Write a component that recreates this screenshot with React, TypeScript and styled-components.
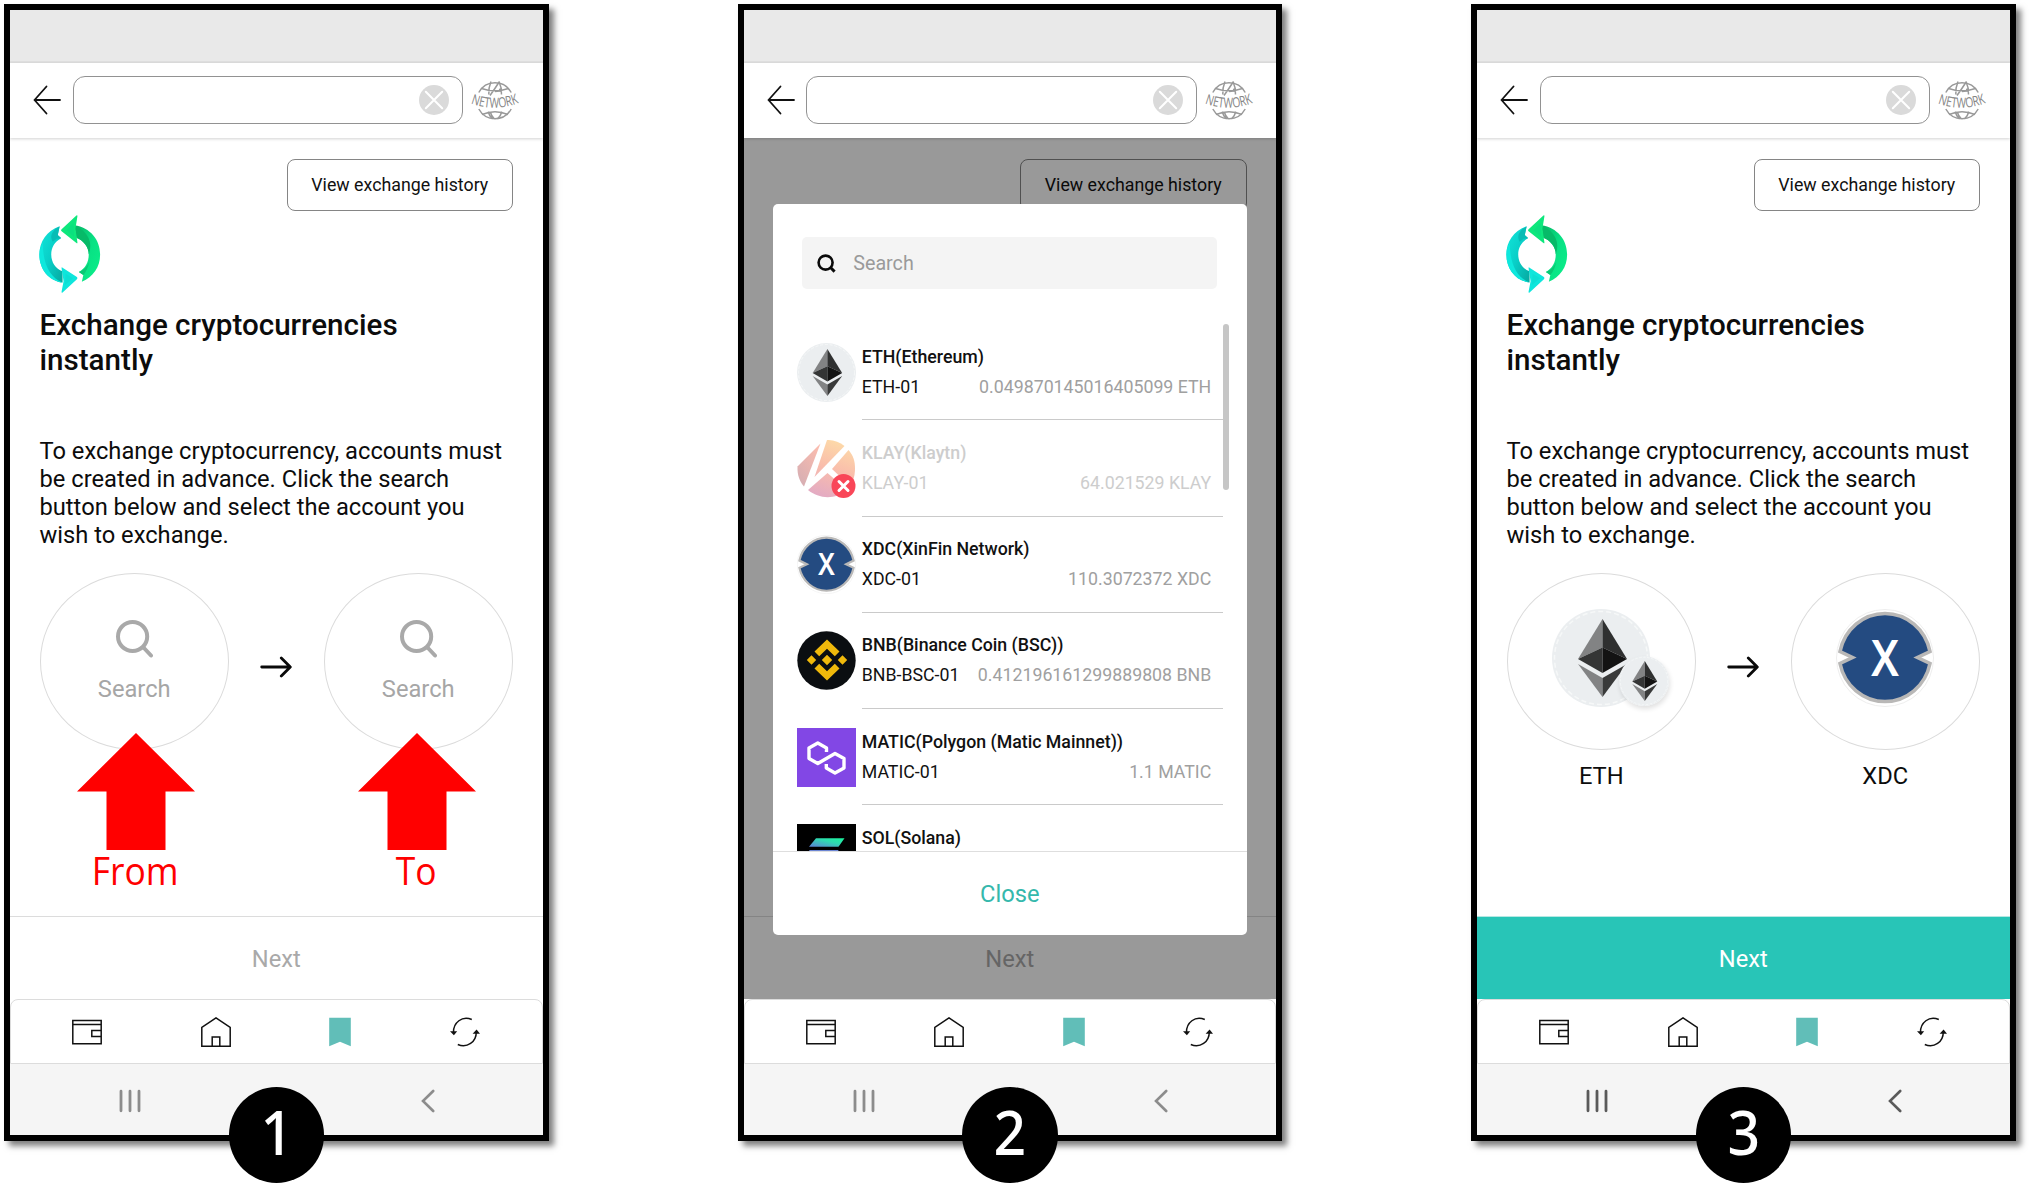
import React from "react";
import styled, { createGlobalStyle } from "styled-components";

const Global = createGlobalStyle`
  * { box-sizing: border-box; }
  body { margin: 0; background: #fff; font-family: Roboto, "Noto Sans", sans-serif; color: #0c0c0c; }
`;

const Board = styled.main`
  width: 2029px;
  height: 1195px;
  padding: 4px 0 0 4px;
  display: flex;
  align-items: flex-start;
  gap: 189px;
  overflow: hidden;
`;

const Phone = styled.section`
  position: relative;
  flex: none;
  width: 544.5px;
  height: 1137px;
  border: 6px solid #000;
  background: #fff;
  display: flex;
  flex-direction: column;
  box-shadow: 5px 5px 6px rgba(0, 0, 0, 0.5);
`;

const StatusBar = styled.div`
  flex: none;
  height: 53px;
  background: #e9e9e9;
  border-bottom: 2px solid #e0e0e0;
`;

const Header = styled.header`
  flex: none;
  height: 75px;
  padding: 0 20px 2px 23px;
  display: flex;
  align-items: center;
  box-shadow: 0 1px 3px rgba(0, 0, 0, 0.18);
`;

const AddressField = styled.div`
  flex: none;
  width: 390.5px;
  height: 48px;
  margin: 0 5px 0 11.5px;
  padding-right: 13px;
  border: 1.5px solid #929292;
  border-radius: 12px;
  display: flex;
  align-items: center;
  justify-content: flex-end;
`;

const Content = styled.div`
  flex: 1;
  min-height: 0;
  padding: 21px 29.5px 0 29.5px;
  display: flex;
  flex-direction: column;
  align-items: stretch;
`;

const HistoryButton = styled.button`
  align-self: flex-end;
  width: 226.5px;
  height: 52px;
  padding: 0;
  border: 1.5px solid #858585;
  border-radius: 8px;
  background: transparent;
  font: 400 17.8px/50px Roboto, sans-serif;
  color: #111;
`;

const Logo = styled.svg`
  flex: none;
  width: 79px;
  height: 94px;
  margin: -6px 0 3px -9.5px;
`;

const Title = styled.h1`
  margin: 6px 0 59px;
  font-size: 29.6px;
  font-weight: 500;
  line-height: 35px;
`;

const Intro = styled.p`
  margin: 0 -12px 24px 0;
  font-size: 23.7px;
  line-height: 28.1px;
`;

const Pair = styled.div`
  display: flex;
  justify-content: space-between;
  align-items: flex-start;
`;

const Slot = styled.div`
  width: 189.5px;
  display: flex;
  flex-direction: column;
  align-items: center;
`;

const Oval = styled.div<{ $filled?: boolean }>`
  width: 189.5px;
  height: 177px;
  padding-top: ${(p) => (p.$filled ? "35px" : "46px")};
  border: 1.5px solid #dbdbdb;
  border-radius: 50%;
  display: flex;
  flex-direction: column;
  align-items: center;
  gap: 16.5px;
`;

const OvalLabel = styled.span`
  font-size: 23.7px;
  line-height: 28px;
  color: #a6a6a6;
`;

const CoinLabel = styled.span`
  margin-top: 12px;
  font-size: 23.7px;
  line-height: 28px;
`;

const ArrowBox = styled.div`
  height: 187px;
  display: flex;
  align-items: center;
`;

const CoinStack = styled.div`
  position: relative;
  width: 98px;
  height: 98px;
`;

const SmallCoin = styled.div`
  position: absolute;
  left: 67px;
  top: 47px;
  width: 50px;
  height: 50px;
  border-radius: 50%;
  box-shadow: 1px 3px 5px rgba(0, 0, 0, 0.12);
`;

const NextBar = styled.div<{ $active?: boolean }>`
  flex: none;
  height: 82.5px;
  border-top: 1.5px solid ${(p) => (p.$active ? "#b5e8e3" : "#dcdcdc")};
  background: ${(p) => (p.$active ? "#28c5b7" : "transparent")};
  color: ${(p) => (p.$active ? "#fff" : "#a9a9a9")};
  font-size: 23.7px;
  line-height: 84px;
  text-align: center;
`;

const TabBar = styled.nav`
  flex: none;
  height: 65.5px;
  padding: 1px 61.5px 0 61px;
  border: 1px solid #dcdcdc;
  border-radius: 8px 8px 0 0;
  display: flex;
  align-items: center;
  justify-content: space-between;
  background: #fff;
`;

const SystemBar = styled.div`
  flex: none;
  height: 71px;
  padding: 3px 108px 0 109px;
  display: flex;
  align-items: center;
  justify-content: space-between;
  background: #f5f5f5;
`;

const Badge = styled.div`
  position: absolute;
  left: 218.5px;
  bottom: -48px;
  width: 95.5px;
  height: 96px;
  border-radius: 50%;
  background: #000;
  color: #fff;
  font: 500 62px/89px "Noto Sans", sans-serif;
  text-align: center;
`;

const Digit = styled.span`
  display: inline-block;
  transform: scaleX(0.92);
`;

const Pointer = styled.div<{ $x: number }>`
  position: absolute;
  left: ${(p) => p.$x}px;
  top: 723px;
  width: 118px;
  display: flex;
  flex-direction: column;
  align-items: center;
`;

const PointerLabel = styled.span`
  color: #f00;
  font: 400 38.5px/40px "Open Sans", sans-serif;
  transform: scaleX(0.92);
`;

const Dim = styled.div`
  position: absolute;
  left: 0;
  right: 0;
  top: 128px;
  height: 861px;
  padding-top: 65.5px;
  background: rgba(0, 0, 0, 0.4);
  display: flex;
  justify-content: center;
  align-items: flex-start;
`;

const Modal = styled.div`
  width: 474px;
  height: 731px;
  border-radius: 5px;
  background: #fff;
  display: flex;
  flex-direction: column;
`;

const SearchField = styled.div`
  flex: none;
  height: 52px;
  margin: 33.5px 29.5px 35px 29px;
  padding-left: 15px;
  border-radius: 5px;
  background: #f4f4f4;
  display: flex;
  align-items: center;
  gap: 17.5px;
  font-size: 19.7px;
  line-height: 53px;
  color: #9a9a9a;
`;

const List = styled.div`
  flex: 1;
  min-height: 0;
  padding: 0 18px 0 24px;
  display: flex;
  overflow: hidden;
`;

const Rows = styled.div`
  width: 426px;
`;

const Thumb = styled.div`
  width: 6px;
  height: 166px;
  border-radius: 3px;
  background: #c6c6c6;
`;

const Row = styled.div`
  height: 96.3px;
  display: flex;
  align-items: flex-start;
`;

const CoinIcon = styled.div`
  flex: none;
  width: 59px;
  height: 59px;
  margin-top: 18.5px;
`;

const RowBody = styled.div<{ $off?: boolean }>`
  flex: 1;
  height: 96.3px;
  margin-left: 6px;
  padding: 17.5px 11.5px 0 0;
  border-bottom: 1.5px solid #cacaca;
  color: ${(p) => (p.$off ? "#cdcdcd" : "#111")};
  font-size: 17.75px;
  line-height: 30px;
  white-space: nowrap;
`;

const RowName = styled.div`
  font-weight: 500;
`;

const RowMeta = styled.div`
  display: flex;
  justify-content: space-between;
`;

const Amount = styled.span<{ $off?: boolean }>`
  color: ${(p) => (p.$off ? "#cdcdcd" : "#a0a0a0")};
`;

const CloseBar = styled.div`
  flex: none;
  height: 84px;
  border-top: 1.5px solid #dedede;
  color: #35b8ac;
  font-size: 23.7px;
  line-height: 84px;
  text-align: center;
`;

const BackIcon = () => (
  <svg width="28" height="30" viewBox="0 0 28 30" fill="none" stroke="#111" strokeWidth="1.8" strokeLinecap="round" strokeLinejoin="round">
    <path d="M27 15H1.5M13.5 1.5L1.5 15l12 13.5" />
  </svg>
);

const ClearIcon = () => (
  <svg width="30" height="30" viewBox="0 0 30 30">
    <circle cx="15" cy="15" r="15" fill="#dadada" />
    <path d="M6.8 6.8l16.4 16.4M23.2 6.8L6.8 23.2" stroke="#fff" strokeWidth="2" strokeLinecap="round" />
  </svg>
);

const NetworkIcon = () => (
  <svg width="54" height="50" viewBox="-3 -4 54 50" fill="none" stroke="#999" strokeWidth="1.5">
    <path d="M7.800 13.500a18.500 18.800 0 0 1 32.400 0M7.800 30a18.500 18.800 0 0 0 32.400 0" />
    <path d="M10.500 9.500Q24 14 37.500 9.500M20 2.500Q17.500 8.500 17.800 15.500M28 2.500Q30.800 8.500 30.500 15.500M28.500 2.500Q24 9.500 19 16.500M24 12.500l7-.8" />
    <path d="M11 35.500Q24 30 37 35.500M17.500 32.500Q18 37 21.500 40M30.500 32.500Q30 37 26.500 40M23 39.500Q20 36 19.500 33.500" />
    <circle cx="29.500" cy="11" r="1.700" fill="#999" stroke="none" />
    <path id="networkArc" d="M-.3 24.300Q24 33.500 48.300 23.800" stroke="none" />
    <text fontFamily="Open Sans, sans-serif" fontSize="14" fill="#858585" stroke="none">
      <textPath href="#networkArc" textLength="49.500" lengthAdjust="spacingAndGlyphs">NETWORK</textPath>
    </text>
  </svg>
);

const ExchangeLogo = () => (
  <Logo viewBox="0 0 80 95">
    <defs>
      <linearGradient id="cyanRing" x1="0" y1="0" x2="1" y2="1">
        <stop offset="0" stopColor="#12e6da" />
        <stop offset="0.5" stopColor="#09cfc8" />
        <stop offset="1" stopColor="#06a89f" />
      </linearGradient>
      <linearGradient id="greenRing" x1="0" y1="0" x2="1" y2="1">
        <stop offset="0" stopColor="#08b565" />
        <stop offset="0.5" stopColor="#08e184" />
        <stop offset="1" stopColor="#0bf08a" />
      </linearGradient>
    </defs>
    <path d="M30 21.5C17 26 9.5 37 9.5 50c0 15 9.500 26.500 23.500 28.500V67C26 64.500 21.500 58 21.500 50c0-7 3.500-13 10-16.500L28 30.500z" fill="url(#cyanRing)" />
    <path d="M26 24C22 28 20 32 23 37l4-3 4.500-.8-3.300-2.900 1.800-8.500z" fill="#08bcb5" />
    <path d="M9.500 50c0 15 9.500 26.500 23.500 28.500C20 73 13 60 13 38c-2.300 3.500-3.500 8-3.500 12z" fill="#0ee8dd" />
    <path d="M45 20.500C61 23 71 35 71 50c0 13-7 22.500-18.500 27.700l1.500-7-4.500-3C56 64 59.500 58 59.500 50c0-7.500-5-14-12.500-17z" fill="url(#greenRing)" />
    <path d="M45 20.500C59 27 64 38 59.500 50c0-7.500-5-14-12.500-17z" fill="#07ba68" />
    <path d="M60 57c-2 5-5 8.500-10.500 10.700l4.500 3c3-3.700 5-8 6-13.700z" fill="#09c873" />
    <path d="M47 10.500q1.200-1 1 1L46 24l2 13.500q.2 2-1 .8L32 26.500q-1.300-1 0-2z" fill="#0de77c" />
    <path d="M33 63.500q-1.200-1.200-1 .8L34 77l-2 10.500q-.2 2 1 .9L47.500 75q1.200-1.200 0-2.300z" fill="#0ee6dc" />
    <path d="M44 18.500L37 25.500 44.500 32zM36 69.500l7.500 4.500-8 7z" fill="#0a9" opacity=".12" />
  </Logo>
);

const SearchIcon = () => (
  <svg width="37" height="38" viewBox="0 0 37 38" fill="none" stroke="#a9a9a9" strokeWidth="4">
    <ellipse cx="16.600" cy="16.500" rx="14.600" ry="14.500" />
    <path d="M27.500 27.500l7.500 8" strokeLinecap="round" />
  </svg>
);

const SmallSearchIcon = () => (
  <svg width="19" height="19" viewBox="0 0 19 19" fill="none" stroke="#0a0a0a" strokeWidth="2.6">
    <circle cx="8.600" cy="8.600" r="7" />
    <path d="M13 13l4.600 4.600" strokeWidth="2.900" />
  </svg>
);

const RightArrow = () => (
  <svg width="32" height="22" viewBox="0 0 32 22" fill="none" stroke="#0a0a0a" strokeWidth="2.800" strokeLinecap="round" strokeLinejoin="round">
    <path d="M1.700 11h28.300M21.300 2l9 9-9 9" />
  </svg>
);

const RedArrow = () => (
  <svg width="118" height="117" viewBox="0 0 118 117">
    <path d="M59 0l59 58.500H88.500V117H29.500V58.500H0z" fill="#f00" />
  </svg>
);

const WalletIcon = () => (
  <svg width="30" height="30" viewBox="0 0 30 30" fill="none" stroke="#111" strokeWidth="1.500">
    <path d="M.8 3.500h28.400v23.300H.8zM.8 7.500h28.400M29.200 13.500h-9.400v6h9.400" />
  </svg>
);

const HomeIcon = () => (
  <svg width="30" height="30" viewBox="0 0 30 30" fill="none" stroke="#111" strokeWidth="1.500">
    <path d="M.8 29.200V10.500L15 .9l14.200 9.600v18.700zM11.200 29v-9h7.600v9" />
  </svg>
);

const BookmarkIcon = () => (
  <svg width="22" height="30" viewBox="0 0 22 30">
    <path d="M.2.800h21.600v28.400L11 24.800.2 29.200z" fill="#61beb8" />
  </svg>
);

const RefreshIcon = () => (
  <svg width="30" height="30" viewBox="0 0 30 30" fill="none" stroke="#111" strokeWidth="1.500">
    <path d="M21.800 2.500C12-1.500 3.300 5.500 3.500 15.500M7.800 27.500C17 31.500 26.500 25 26.300 14.500" />
    <path d="M0 14.200h7.200L3.900 18.200zM22.600 16.800H30L26.600 12.600z" fill="#111" stroke="none" />
  </svg>
);

const RecentsIcon = ({ color }: { color: string }) => (
  <svg width="22" height="24" viewBox="0 0 22 24" stroke={color} strokeWidth="2.800" strokeLinecap="round">
    <path d="M2 2.200v19.600M11 2.200v19.600M20 2.200v19.600" />
  </svg>
);

const BackChevron = ({ color }: { color: string }) => (
  <svg width="14" height="24" viewBox="0 0 14 24" fill="none" stroke={color} strokeWidth="2.600" strokeLinecap="round">
    <path d="M12.200 2L2 12l10.200 10" />
  </svg>
);

const EthCoin = () => (
  <svg width="100%" height="100%" viewBox="0 0 98 98">
    <circle cx="49" cy="49" r="49" fill="#ebeef0" />
    <circle cx="49" cy="49" r="46.500" fill="none" stroke="#f6f8f8" strokeWidth="1.500" strokeDasharray="5 3" />
    <path d="M50.500 10v28.500L26 50z" fill="#828384" />
    <path d="M50.500 10v28.500L75 50z" fill="#2f3030" />
    <path d="M26 50l24.500-11.500V64z" fill="#343535" />
    <path d="M75 50L50.500 38.500V64z" fill="#131313" />
    <path d="M26 55l24.500 14v19z" fill="#828384" />
    <path d="M75 55L50.500 69v19z" fill="#393a3a" />
  </svg>
);

const XdcCoin = () => (
  <svg width="100%" height="100%" viewBox="0 0 98 98">
    <circle cx="49" cy="49" r="48.500" fill="#fff" stroke="#eee" strokeWidth="1" />
    <path
      d="M4 42.500A46 48 0 0 1 94 42.500L81.500 48.500 94 54.500A46 48 0 0 1 4 54.500L16.500 48.500z"
      fill="#244b81"
      stroke="#b9b8b7"
      strokeWidth="3.600"
    />
    <text x="49" y="67" textAnchor="middle" fontFamily="Noto Sans, sans-serif" fontWeight="600" fontSize="50" fill="#fff" textLength="28" lengthAdjust="spacingAndGlyphs">X</text>
  </svg>
);

const KlayCoin = () => (
  <svg width="100%" height="100%" viewBox="0 0 59 59">
    <defs>
      <linearGradient id="klayFill" gradientUnits="userSpaceOnUse" x1="42" y1="2" x2="22" y2="58">
        <stop offset="0" stopColor="#fddaa8" />
        <stop offset="0.500" stopColor="#f9bcac" />
        <stop offset="1" stopColor="#e2aac4" />
      </linearGradient>
      <linearGradient id="klayLeft" x1="0.800" y1="0" x2="0.200" y2="1">
        <stop offset="0" stopColor="#fbbcae" />
        <stop offset="1" stopColor="#d6aeb3" />
      </linearGradient>
    </defs>
    <path d="M23.500 4.500L.5 27.500C0 36 3 43 7 47.500z" fill="url(#klayLeft)" />
    <path d="M30 1C36.500.5 42.500 3 47.500 7L17.500 38z" fill="url(#klayFill)" />
    <path d="M51.500 11C56 16 58 22 58 29c0 8-2 14-5 18L35 30z" fill="url(#klayFill)" />
    <path d="M11 51l19.500-17L50 51C38 61 22 60 11 51z" fill="url(#klayFill)" />
    <circle cx="46.500" cy="47" r="12" fill="#f94658" />
    <path d="M42 42.500l9 9M51 42.500l-9 9" stroke="#fff" strokeWidth="3" strokeLinecap="round" />
  </svg>
);

const BnbCoin = () => (
  <svg width="100%" height="100%" viewBox="0 0 59 59">
    <circle cx="29.500" cy="29.500" r="29.200" fill="#0b0e11" />
    <g fill="#f0b90b">
      <path d="M30 8.500l12.500 12-4.700 4.700L30 17.700l-7.800 7.500-4.700-4.700z" />
      <path d="M30 49.500l12.500-12-4.700-4.700L30 40.300l-7.800-7.500-4.700 4.700z" />
      <path d="M14.500 24.300l4.700 4.700-4.700 4.700L9.800 29zM45.500 24.300l4.700 4.700-4.700 4.700-4.700-4.700zM30 23.800l5.200 5.200-5.200 5.200-5.200-5.200z" />
    </g>
  </svg>
);

const MaticCoin = () => (
  <svg width="100%" height="100%" viewBox="0 0 59 59">
    <path d="M0 0h59v59H0z" fill="#8247e5" />
    <path
      d="M29.500 24V20l-8.700-5L12 20v10.500l8.800 5L38 25.500l9 5V40l-9 5-8.700-5v-4"
      fill="none"
      stroke="#fff"
      strokeWidth="3.400"
      strokeLinejoin="round"
    />
  </svg>
);

const SolCoin = () => (
  <svg width="100%" height="100%" viewBox="0 0 59 59">
    <defs>
      <linearGradient id="solTop" x1="0" y1="1" x2="1" y2="0">
        <stop offset="0" stopColor="#5f7fd8" />
        <stop offset="0.600" stopColor="#2edbb0" />
        <stop offset="1" stopColor="#19f59c" />
      </linearGradient>
    </defs>
    <path d="M0 0h59v59H0z" fill="#000" />
    <path d="M19 14.300h28.500l-6 8.500H12z" fill="url(#solTop)" />
    <path d="M12 26h29l6 8.500H18z" fill="#6c86d4" />
    <path d="M18 38h29l-6 8.500H12z" fill="#9a5be8" />
  </svg>
);

type Coin = { icon: React.ReactNode; name: string; account: string; amount: string; off?: boolean };

const coins: Coin[] = [
  { icon: <EthCoin />, name: "ETH(Ethereum)", account: "ETH-01", amount: "0.049870145016405099 ETH" },
  { icon: <KlayCoin />, name: "KLAY(Klaytn)", account: "KLAY-01", amount: "64.021529 KLAY", off: true },
  { icon: <XdcCoin />, name: "XDC(XinFin Network)", account: "XDC-01", amount: "110.3072372 XDC" },
  { icon: <BnbCoin />, name: "BNB(Binance Coin (BSC))", account: "BNB-BSC-01", amount: "0.412196161299889808 BNB" },
  { icon: <MaticCoin />, name: "MATIC(Polygon (Matic Mainnet))", account: "MATIC-01", amount: "1.1 MATIC" },
  { icon: <SolCoin />, name: "SOL(Solana)", account: "", amount: "" },
];

const SearchSlot = () => (
  <Slot>
    <Oval>
      <SearchIcon />
      <OvalLabel>Search</OvalLabel>
    </Oval>
  </Slot>
);

const CoinPicker = () => (
  <Dim>
    <Modal>
      <SearchField>
        <SmallSearchIcon />
        Search
      </SearchField>
      <List>
        <Rows>
          {coins.map((c) => (
            <Row key={c.name}>
              <CoinIcon>{c.icon}</CoinIcon>
              <RowBody $off={c.off}>
                <RowName>{c.name}</RowName>
                <RowMeta>
                  <span>{c.account}</span>
                  <Amount $off={c.off}>{c.amount}</Amount>
                </RowMeta>
              </RowBody>
            </Row>
          ))}
        </Rows>
        <Thumb />
      </List>
      <CloseBar>Close</CloseBar>
    </Modal>
  </Dim>
);

type ScreenProps = {
  step: number;
  body?: React.ReactNode;
  active?: boolean;
  overlay?: React.ReactNode;
};

const Screen = ({ step, body, active, overlay }: ScreenProps) => {
  const systemColor = active ? "#5a5a5a" : "#8c8c8c";
  return (
    <Phone>
      <StatusBar />
      <Header>
        <BackIcon />
        <AddressField>
          <ClearIcon />
        </AddressField>
        <NetworkIcon />
      </Header>
      <Content>
        <HistoryButton>View exchange history</HistoryButton>
        {body && (
          <>
            <ExchangeLogo />
            <Title>
              Exchange cryptocurrencies
              <br />
              instantly
            </Title>
            <Intro>
              To exchange cryptocurrency, accounts must
              <br />
              be created in advance. Click the search
              <br />
              button below and select the account you
              <br />
              wish to exchange.
            </Intro>
            {body}
          </>
        )}
      </Content>
      <NextBar $active={active}>Next</NextBar>
      <TabBar>
        <WalletIcon />
        <HomeIcon />
        <BookmarkIcon />
        <RefreshIcon />
      </TabBar>
      <SystemBar>
        <RecentsIcon color={systemColor} />
        <BackChevron color={systemColor} />
      </SystemBar>
      {overlay}
      <Badge>
        <Digit>{step}</Digit>
      </Badge>
    </Phone>
  );
};

export default function App() {
  return (
    <>
      <Global />
      <Board>
        <Screen
          step={1}
          body={
            <Pair>
              <SearchSlot />
              <ArrowBox>
                <RightArrow />
              </ArrowBox>
              <SearchSlot />
            </Pair>
          }
          overlay={
            <>
              <Pointer $x={66.5}>
                <RedArrow />
                <PointerLabel>From</PointerLabel>
              </Pointer>
              <Pointer $x={347.5}>
                <RedArrow />
                <PointerLabel>To</PointerLabel>
              </Pointer>
            </>
          }
        />
        <Screen step={2} overlay={<CoinPicker />} />
        <Screen
          step={3}
          active
          body={
            <Pair>
              <Slot>
                <Oval $filled>
                  <CoinStack>
                    <EthCoin />
                    <SmallCoin>
                      <EthCoin />
                    </SmallCoin>
                  </CoinStack>
                </Oval>
                <CoinLabel>ETH</CoinLabel>
              </Slot>
              <ArrowBox>
                <RightArrow />
              </ArrowBox>
              <Slot>
                <Oval $filled>
                  <CoinStack>
                    <XdcCoin />
                  </CoinStack>
                </Oval>
                <CoinLabel>XDC</CoinLabel>
              </Slot>
            </Pair>
          }
        />
      </Board>
    </>
  );
}
